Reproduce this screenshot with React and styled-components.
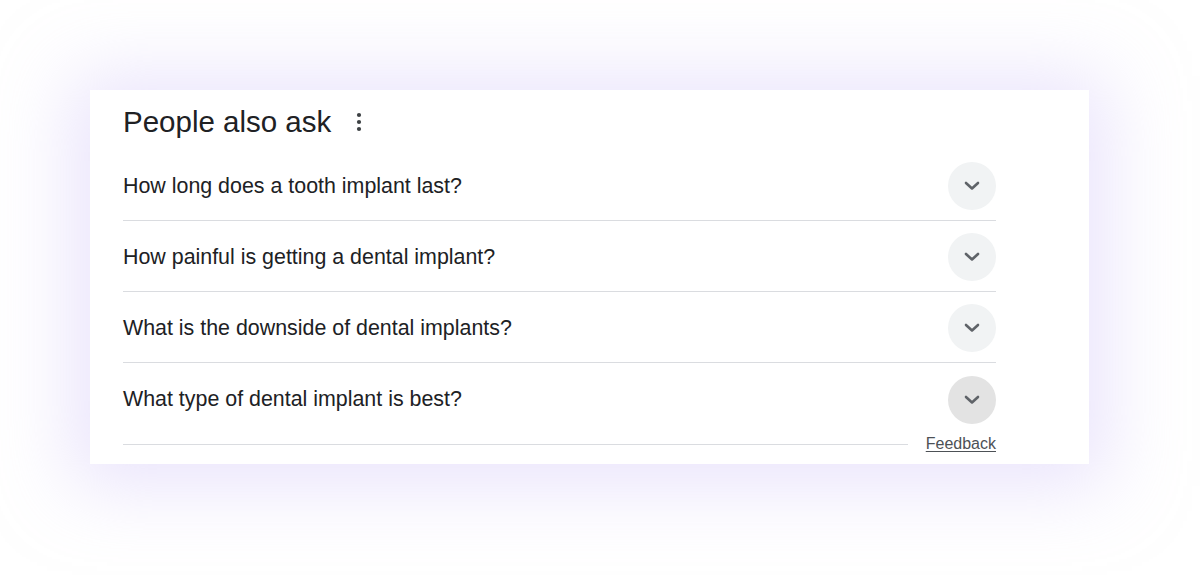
import styled, { createGlobalStyle } from 'styled-components';

const GlobalStyle = createGlobalStyle`
  html, body {
    margin: 0;
    padding: 0;
    background: #ffffff;
  }
  body {
    font-family: "Liberation Sans", Arial, sans-serif;
    color: #202124;
  }
`;

const Page = styled.div`
  width: 1200px;
  height: 575px;
  padding: 90px 111px 0 90px;
  box-sizing: border-box;
  overflow: hidden;
`;

const Card = styled.div`
  width: 999px;
  height: 374px;
  box-sizing: border-box;
  background: #ffffff;
  padding: 0 93px 10px 33px;
  box-shadow: 0 4px 70px 18px rgba(214, 202, 250, 0.5);
  display: flex;
  flex-direction: column;
`;

const Header = styled.div`
  height: 60px;
  box-sizing: border-box;
  padding-top: 3px;
  display: flex;
  align-items: center;
  gap: 16px;
`;

const Title = styled.h2`
  margin: 0;
  font-size: 29.5px;
  font-weight: 400;
  line-height: 1;
  color: #202124;
`;

const DotsButton = styled.div`
  width: 24px;
  height: 24px;
  display: flex;
  align-items: center;
  justify-content: center;
`;

const Row = styled.div`
  height: 71px;
  box-sizing: border-box;
  padding-top: 2px;
  display: flex;
  align-items: center;
  justify-content: space-between;
  border-bottom: ${(p) => (p.last ? 'none' : '1px solid #dadce0')};
`;

const Question = styled.span`
  font-size: 21.4px;
  color: #202124;
`;

const Toggle = styled.div`
  width: 48px;
  height: 48px;
  border-radius: 50%;
  background: ${(p) => (p.hover ? '#e3e3e3' : '#f1f3f4')};
  display: flex;
  align-items: center;
  justify-content: center;
`;

const Footer = styled.div`
  height: 20px;
  display: flex;
  align-items: center;
  gap: 18px;
`;

const Line = styled.div`
  flex: 1;
  border-top: 1px solid #dadce0;
`;

const FeedbackLink = styled.a`
  font-size: 16px;
  color: #4d5156;
  text-decoration: underline;
  text-underline-offset: 2px;
`;

const Dots = () => (
  <svg width="6" height="20" viewBox="0 0 6 20">
    <circle cx="3" cy="3" r="2.1" fill="#3c4043" />
    <circle cx="3" cy="10" r="2.1" fill="#3c4043" />
    <circle cx="3" cy="17" r="2.1" fill="#3c4043" />
  </svg>
);

const Chevron = () => (
  <svg width="16" height="10" viewBox="0 0 16 10">
    <path
      d="M2 2 L8 7.5 L14 2"
      fill="none"
      stroke="#5f6368"
      strokeWidth="2.6"
      strokeLinecap="round"
      strokeLinejoin="round"
    />
  </svg>
);

const questions = [
  'How long does a tooth implant last?',
  'How painful is getting a dental implant?',
  'What is the downside of dental implants?',
  'What type of dental implant is best?',
];

export default function App() {
  return (
    <>
      <GlobalStyle />
      <Page>
        <Card>
          <Header>
            <Title>People also ask</Title>
            <DotsButton>
              <Dots />
            </DotsButton>
          </Header>
          {questions.map((q, i) => (
            <Row key={q} last={i === questions.length - 1}>
              <Question>{q}</Question>
              <Toggle hover={i === questions.length - 1}>
                <Chevron />
              </Toggle>
            </Row>
          ))}
          <Footer>
            <Line />
            <FeedbackLink href="#">Feedback</FeedbackLink>
          </Footer>
        </Card>
      </Page>
    </>
  );
}
